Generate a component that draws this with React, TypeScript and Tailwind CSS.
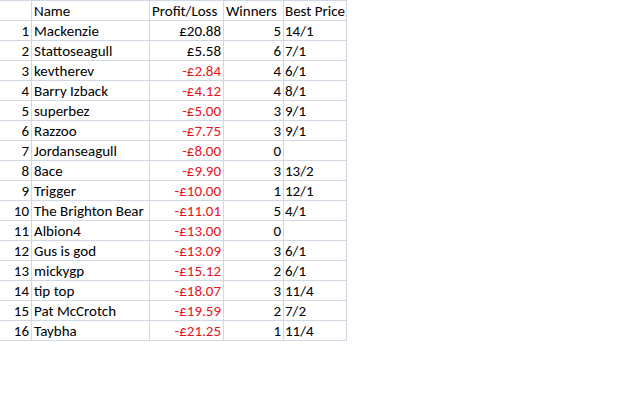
import React from "react";

type Row = [string, string, string, string];

const rows: Row[] = [
  ["Mackenzie", "£20.88", "5", "14/1"],
  ["Stattoseagull", "£5.58", "6", "7/1"],
  ["kevtherev", "-£2.84", "4", "6/1"],
  ["Barry Izback", "-£4.12", "4", "8/1"],
  ["superbez", "-£5.00", "3", "9/1"],
  ["Razzoo", "-£7.75", "3", "9/1"],
  ["Jordanseagull", "-£8.00", "0", ""],
  ["8ace", "-£9.90", "3", "13/2"],
  ["Trigger", "-£10.00", "1", "12/1"],
  ["The Brighton Bear", "-£11.01", "5", "4/1"],
  ["Albion4", "-£13.00", "0", ""],
  ["Gus is god", "-£13.09", "3", "6/1"],
  ["mickygp", "-£15.12", "2", "6/1"],
  ["tip top", "-£18.07", "3", "11/4"],
  ["Pat McCrotch", "-£19.59", "2", "7/2"],
  ["Taybha", "-£21.25", "1", "11/4"],
];

const cell =
  "h-[20px] pt-[1px] border-r border-b border-[#d0d7e5] whitespace-nowrap overflow-visible leading-[19px] text-[15px]";

export default function App() {
  return (
    <div
      className="w-[640px] h-[400px] bg-white text-black"
      style={{ fontFamily: "Carlito, Lato, 'Open Sans', sans-serif" }}
    >
      <div className="grid grid-cols-[32px_118px_74px_60px_63px] w-max border-t border-[#d0d7e5]">
        <div className={cell}></div>
        <div className={`${cell} pl-[2px]`}>Name</div>
        <div className={`${cell} pl-[2px]`}>Profit/Loss</div>
        <div className={`${cell} pl-[2px]`}>Winners</div>
        <div className={`${cell} pl-[1px]`}>Best Price</div>
        {rows.map((r, i) => (
          <React.Fragment key={i}>
            <div className={`${cell} text-right pr-[2px]`}>{i + 1}</div>
            <div className={`${cell} pl-[2px]`}>{r[0]}</div>
            <div
              className={`${cell} text-right pr-[2px] ${
                r[1].startsWith("-") ? "text-[#e8141c]" : ""
              }`}
            >
              {r[1]}
            </div>
            <div className={`${cell} text-right pr-[2px]`}>{r[2]}</div>
            <div className={`${cell} pl-[1px]`}>{r[3]}</div>
          </React.Fragment>
        ))}
      </div>
    </div>
  );
}
